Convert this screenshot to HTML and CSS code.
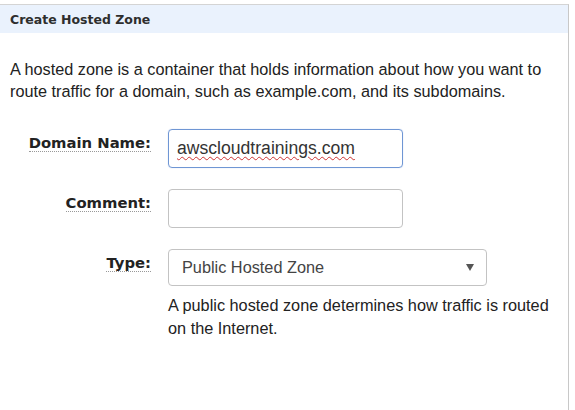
FILE: index.html
```html
<!DOCTYPE html>
<html>
<head>
<meta charset="utf-8">
<link rel="stylesheet" href="styles.css">
</head>
<body>
<div class="panel">
  <div class="header">Create Hosted Zone</div>
  <p class="intro">A hosted zone is a container that holds information about how you want to route traffic for a domain, such as example.com, and its subdomains.</p>
  <div class="form">
    <div class="row">
      <div class="label"><span>Domain Name:</span></div>
      <div class="field"><div class="input focused"><span class="spell">awscloudtrainings.com</span></div></div>
    </div>
    <div class="row">
      <div class="label"><span>Comment:</span></div>
      <div class="field"><div class="input"></div></div>
    </div>
    <div class="row">
      <div class="label"><span>Type:</span></div>
      <div class="field">
        <div class="select"><span>Public Hosted Zone</span><span class="caret"></span></div>
        <p class="help">A public hosted zone determines how traffic is routed on the Internet.</p>
      </div>
    </div>
  </div>
</div>
</body>
</html>
```
FILE: styles.css
```css
html, body { margin: 0; padding: 0; background: #fff; }
body { font-family: "Liberation Sans", Arial, sans-serif; color: #222; }
.panel {
  margin-top: 4px;
  width: 569px;
  height: 406px;
  border-top: 1px solid #d4d4d4;
  border-right: 1px solid #c8c8c8;
  box-sizing: border-box;
}
.header {
  background: #eaf2fd;
  height: 28px;
  padding-left: 10px;
  font-family: "DejaVu Sans", Verdana, sans-serif;
  font-weight: bold;
  font-size: 12.5px;
  line-height: 30px;
  color: #2e2e2e;
}
.intro {
  margin: 25px 0 0 10px;
  font-size: 16.25px;
  line-height: 22px;
  color: #222;
  width: 550px;
}
.form { margin-top: 27px; }
.row { display: flex; margin-bottom: 21px; }
.label {
  width: 151px;
  text-align: right;
  font-family: "DejaVu Sans", Verdana, sans-serif;
  font-weight: bold;
  font-size: 14.8px;
  line-height: 18px;
  padding-top: 5px;
  color: #222;
}
.label span { border-bottom: 1px dotted #999; }
.field { margin-left: 17px; }
.input {
  width: 235px;
  height: 39px;
  box-sizing: border-box;
  border: 1px solid #c3c3c3;
  border-radius: 4px;
  padding: 0 8px;
  font-size: 17.6px;
  line-height: 37px;
  color: #333;
}
.input.focused { border-color: #6f96d4; box-shadow: 0 0 1px #a8c2ea; }
.spell { text-decoration: underline wavy #c33; text-decoration-thickness: 1px; text-underline-offset: 2px; }
.select {
  width: 319px;
  height: 37px;
  box-sizing: border-box;
  border: 1px solid #c3c3c3;
  border-radius: 4px;
  padding: 0 12px 0 13px;
  font-size: 16.3px;
  line-height: 35px;
  color: #444;
  display: flex;
  justify-content: space-between;
  align-items: center;
}
.caret {
  width: 0; height: 0;
  border-left: 4px solid transparent;
  border-right: 4px solid transparent;
  border-top: 7px solid #555;
}
.help {
  margin: 8px 0 0 0;
  font-size: 16.3px;
  line-height: 23px;
  width: 395px;
  color: #222;
}
```
